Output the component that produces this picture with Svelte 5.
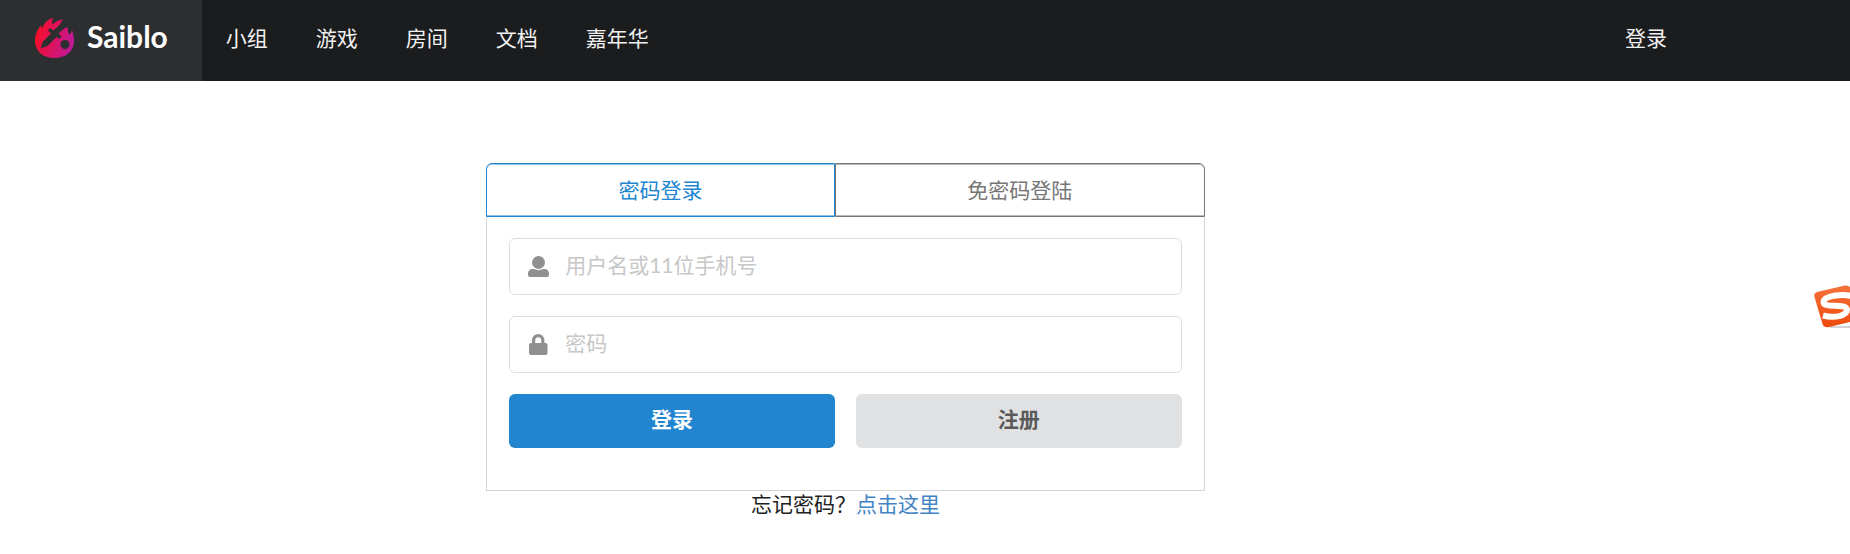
<script>
  const links = ['小组', '游戏', '房间', '文档', '嘉年华'];
  const tabs = ['密码登录', '免密码登陆'];
  let active = $state(0);
  let username = $state('');
  let password = $state('');
</script>

<header>
  <a class="brand" href="#home">
    <svg viewBox="0 0 39 40" width="39" height="40" aria-hidden="true">
      <defs>
        <linearGradient id="flame" x1="0" y1="0.35" x2="1" y2="0.65">
          <stop offset="0" stop-color="#fb0d24" />
          <stop offset="1" stop-color="#bd1a9c" />
        </linearGradient>
      </defs>
      <path
        fill="url(#flame)"
        d="M18.500 0C16.500 2.500 16.500 4.500 18 6.500C20 3.500 23.500 1.800 28.500 1.500C26 3.500 25 5.500 25.500 8L33 10C32.500 12.500 33 14.500 34.500 16.500C35.800 15.500 36.500 14 37 12C38.500 16 39 20 39 23.500C39 33.500 30.500 40 19.500 40C8.500 40 0 33.500 0 23C0 16.500 2.500 11.500 6.500 6.500C6 8.500 6.200 9.500 7 10.500C9 5.500 12.500 1 18.500 0Z"
      />
      <g fill="#2d2e30">
        <path d="M31 3L30.500 9.500L23.500 15.500L26.500 18.500L24.500 21L21.500 19L12.500 28L5.500 30.500L7.500 24L16 15.500L13 12.500L15 10L18.500 12.500L25 6.500Z" />
        <circle cx="30" cy="26.500" r="4.500" />
      </g>
    </svg>
    <span>Saiblo</span>
  </a>
  <nav>
    {#each links as link}
      <a href="#{link}">{link}</a>
    {/each}
    <a class="signin" href="#login">登录</a>
  </nav>
</header>

<main>
  <section class="card">
    <div class="tabs" role="tablist">
      {#each tabs as tab, i}
        <button type="button" role="tab" aria-selected={active === i} class:active={active === i} onclick={() => (active = i)}>{tab}</button>
      {/each}
    </div>
    <form onsubmit={(e) => e.preventDefault()}>
      <label class="field">
        <svg viewBox="0 0 21 21" width="21" height="21" aria-hidden="true">
          <circle cx="10.500" cy="6.500" r="6.500" />
          <path d="M4.500 13H6C9 14.500 12 14.500 15 13H16.500C19 13 21 15 21 17.500V19Q21 21 19 21H2Q0 21 0 19V17.500C0 15 2 13 4.500 13Z" />
        </svg>
        <input type="text" aria-label="用户名或11位手机号" placeholder="用户名或11位手机号" bind:value={username} />
      </label>
      <label class="field">
        <svg viewBox="0 0 21 21" width="21" height="21" aria-hidden="true">
          <path fill-rule="evenodd" d="M4 9V6.200A6.200 6.200 0 0 1 16.400 6.200V9H17.500Q19.500 9 19.500 11V19Q19.500 21 17.500 21H3Q1 21 1 19V11Q1 9 3 9ZM7.200 9H13.200V6.200A3 3 0 0 0 7.200 6.200Z" />
        </svg>
        <input type="password" aria-label="密码" placeholder="密码" bind:value={password} />
      </label>
      <div class="actions">
        <button class="primary" type="submit">登录</button>
        <button type="button">注册</button>
      </div>
    </form>
  </section>
  <p>忘记密码？<a href="#reset">点击这里</a></p>
</main>

<div class="ime" aria-hidden="true">
  <svg viewBox="0 0 36 43" width="36" height="43">
    <defs>
      <linearGradient id="ime" x1="0" y1="0" x2="0" y2="1">
        <stop offset="0" stop-color="#f5713c" />
        <stop offset="1" stop-color="#ee4a0c" />
      </linearGradient>
    </defs>
    <path d="M16 42H36" stroke="#a5a5ad" stroke-width="1" />
    <path fill="url(#ime)" d="M3 7L31 0.500Q34 0 36 2V37L15 42Q10 43 8.500 39L0.500 12Q-0.500 8 3 7Z" />
    <path fill="none" stroke="#fff" stroke-width="6" d="M38 11C27 8.500 10 11 9.500 17C9.500 24 32 17.500 33 24.500C33 31 20 33.500 9 30.500" />
  </svg>
</div>

<style>
  :global(body) {
    margin: 0;
    background: #fff;
    color: #212121;
    font: 21px/26px Lato, 'Noto Sans CJK SC', sans-serif;
  }
  a {
    color: #4183c4;
    text-decoration: none;
  }
  header {
    display: flex;
    height: 81px;
    background: #1b1c1d;
  }
  .brand {
    display: flex;
    align-items: center;
    box-sizing: border-box;
    gap: 13px;
    padding: 0 34px 6px 35px;
    background: #2d2e30;
    color: #fff;
    font-size: 30px;
    font-weight: 700;
  }
  .brand span {
    padding-bottom: 4px;
  }
  nav {
    display: flex;
    flex: 1;
    align-items: center;
    padding-right: 8.6%;
  }
  nav a {
    padding: 0 24px 6px;
    color: #f1f1f1;
  }
  .signin {
    margin-left: auto;
  }
  main {
    display: flex;
    flex-direction: column;
    align-items: center;
    margin-right: 8.6%;
    padding-top: 82px;
  }
  .card {
    width: 42.5%;
    min-width: 360px;
  }
  button {
    border: 0;
    font: inherit;
    cursor: pointer;
  }
  .tabs {
    display: flex;
  }
  .tabs button {
    flex: 1 1 auto;
    height: 54px;
    padding: 0;
    border: 1px solid #767676;
    background: #fff;
    color: #767676;
    box-shadow: inset 0 1px #bababa, inset 0 -1px #bababa;
  }
  .tabs button:first-child {
    border-top-left-radius: 6px;
  }
  .tabs button:last-child {
    border-top-right-radius: 6px;
  }
  .tabs button.active {
    border-color: #2185d0;
    color: #2185d0;
    box-shadow: inset 0 1px #90c2e7, inset 0 -1px #90c2e7;
  }
  form {
    display: flex;
    flex-direction: column;
    gap: 21px;
    padding: 20px 22px 42px;
    border: 1px solid #d4d4d5;
    border-top-color: #fff;
  }
  .field {
    display: flex;
    align-items: center;
    box-sizing: border-box;
    height: 57px;
    padding: 0 18px;
    gap: 16px;
    border: 1px solid #dededf;
    border-radius: 6px;
  }
  .field svg {
    flex: none;
    fill: #909090;
  }
  .field:focus-within {
    border-color: #85b7d9;
  }
  input {
    flex: 1;
    min-width: 0;
    height: 51px;
    padding: 0 0 4px;
    border: 0;
    outline: 0;
    background: none;
    color: #212121;
    font: inherit;
  }
  input::placeholder {
    color: #c7c7c7;
    opacity: 1;
  }
  .actions {
    display: grid;
    grid-template-columns: 1fr 1fr;
    gap: 21px;
  }
  .actions button {
    height: 54px;
    padding: 0 0 4px;
    border-radius: 6px;
    background: #e0e1e2;
    color: #5a5a5a;
    font-weight: 700;
  }
  .actions .primary {
    background: #2185d0;
    color: #fff;
  }
  p {
    margin: 0;
  }
  .ime {
    position: fixed;
    top: 285px;
    right: 0;
    display: flex;
  }
</style>
